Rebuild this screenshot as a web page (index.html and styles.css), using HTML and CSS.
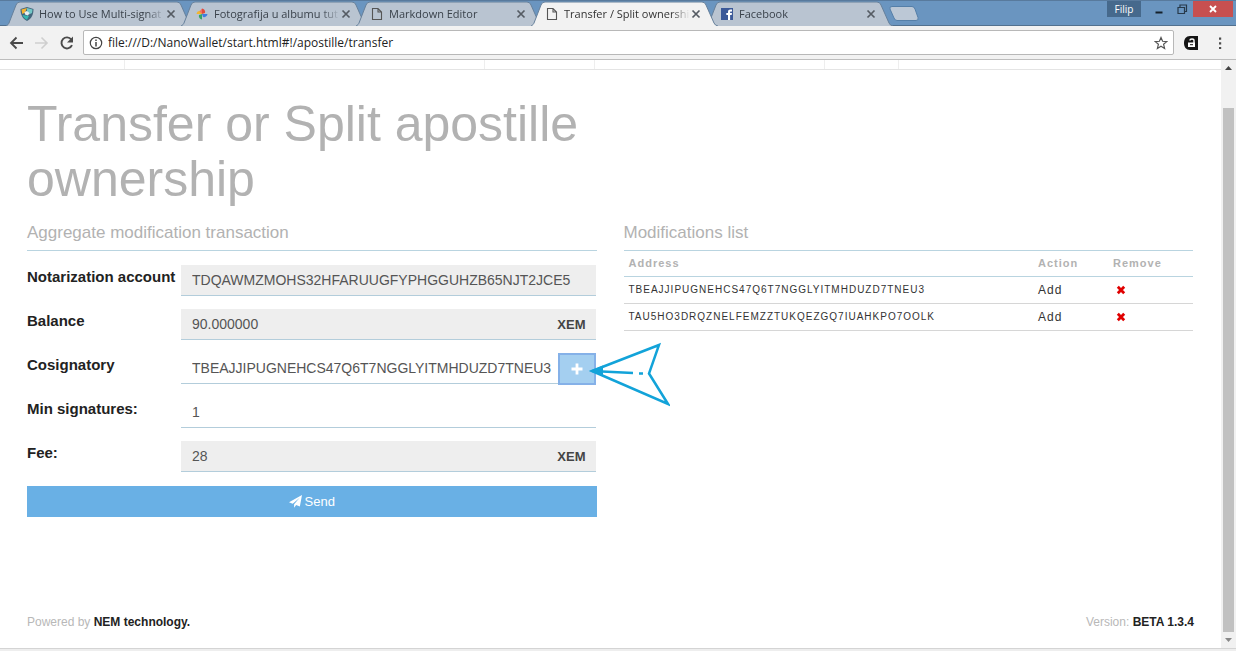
FILE: index.html
```html
<!DOCTYPE html>
<html lang="en">
<head>
<meta charset="utf-8">
<title>Transfer / Split ownership</title>
<link rel="stylesheet" href="styles.css">
</head>
<body>
<svg class="defs" aria-hidden="true">
  <symbol id="tab-shape" viewBox="0 0 187 25" preserveAspectRatio="none"><path d="M0 25 C2 24 2.500 23 3 22 L10 4 Q11 1 14 1 H171 Q174 1 175 4 L183 22 Q184 24.500 187 25"/></symbol>
  <symbol id="close" viewBox="0 0 10 10"><path d="M1.500 1.500 8.500 8.500M8.500 1.500 1.500 8.500" fill="none" stroke="#555b63" stroke-width="1.700"/></symbol>
  <symbol id="doc" viewBox="0 0 12 14"><path d="M1.500 1.500H7L10.500 5V12.500H1.500ZM7 1.500V5H10.500" fill="none" stroke="#555" stroke-width="1.100"/></symbol>
  <symbol id="remove" viewBox="0 0 10 10"><path d="M1.800 1.800 8.200 8.200M8.200 1.800 1.800 8.200" fill="none" stroke="#e00000" stroke-width="2.800"/></symbol>
</svg>

<header class="browser">
  <div class="titlebar">
    <nav class="tabs" aria-label="Tabs">
      <div class="tab">
        <svg class="shape"><use href="#tab-shape"/></svg>
        <svg class="favicon" viewBox="0 0 14 14"><path d="M7 0 13.500 2C13.500 8 11.500 11.500 7 14 2.500 11.500 .5 8 .5 2Z" fill="#42657c"/><path d="M7 1 1.500 2.500 2.300 7 5 5.500Z" fill="#f5b32f"/><path d="M7 1 12.500 2.500 12 6 9 7.500 7 4Z" fill="#72c7c7"/><path d="M2.500 8 6 8.500 9 9 7 12.800C5 12 3.500 10.500 2.500 8Z" fill="#35b6b0"/><path d="M4.500 5 7 4 9.500 6 8 8.500 5 7.500Z" fill="#e7edf0"/></svg>
        <a class="tab-title" href="#">How to Use Multi-signat</a>
        <button class="close" aria-label="Close tab"><svg><use href="#close"/></svg></button>
      </div>
      <div class="tab">
        <svg class="shape"><use href="#tab-shape"/></svg>
        <svg class="favicon" viewBox="0 0 14 14"><path d="M7 7V1.500A3.500 3.500 0 0 1 10 6Z" fill="#e14b3c"/><path d="M7 7H12.500A3.500 3.500 0 0 1 8 10Z" fill="#3f7de0"/><path d="M7 7V12.500A3.500 3.500 0 0 1 4 8Z" fill="#34a465"/><path d="M7 7H1.500A3.500 3.500 0 0 1 6 4Z" fill="#f2b62f"/><path d="M7 1.500V7L4.500 4.500Z" fill="#ef7065"/></svg>
        <a class="tab-title" href="#">Fotografija u albumu tut</a>
        <button class="close" aria-label="Close tab"><svg><use href="#close"/></svg></button>
      </div>
      <div class="tab">
        <svg class="shape"><use href="#tab-shape"/></svg>
        <svg class="favicon"><use href="#doc"/></svg>
        <a class="tab-title" href="#">Markdown Editor</a>
        <button class="close" aria-label="Close tab"><svg><use href="#close"/></svg></button>
      </div>
      <div class="tab active">
        <svg class="shape"><use href="#tab-shape"/></svg>
        <svg class="favicon"><use href="#doc"/></svg>
        <a class="tab-title" href="#" aria-current="page">Transfer / Split ownership</a>
        <button class="close" aria-label="Close tab"><svg><use href="#close"/></svg></button>
      </div>
      <div class="tab">
        <svg class="shape"><use href="#tab-shape"/></svg>
        <svg class="favicon" viewBox="0 0 14 14"><path d="M1 1H13V13H1Z" fill="#3b5998"/><path d="M8 13V8H6.300V6H8V5C8 3.200 9 2.500 10.300 2.500H12V4.400H11C10.300 4.400 10.100 4.700 10.100 5.300V6H12L11.700 8H10.100V13Z" fill="#fff"/></svg>
        <a class="tab-title" href="#">Facebook</a>
        <button class="close" aria-label="Close tab"><svg><use href="#close"/></svg></button>
      </div>
      <button class="new-tab" aria-label="New tab"><svg viewBox="0 0 30 15"><path d="M3 .5H23Q25 .5 26 3L29 11.500Q30 14.500 27 14.500H8Q6 14.500 5 12L1 3Q0 .5 3 .5Z" fill="#bcc8d6" stroke="#557fa8"/></svg></button>
    </nav>
    <div class="window-controls">
      <button class="user">Filip</button>
      <button class="control" aria-label="Minimize"><svg viewBox="0 0 12 12"><path d="M2.500 9.500H9.500" stroke="#15202b" stroke-width="2"/></svg></button>
      <button class="control" aria-label="Restore"><svg viewBox="0 0 12 12"><path d="M2 4.500H8.500V10.500H2ZM4 4V2H10.500V8.500H9" fill="none" stroke="#27394a" stroke-width="1.200"/></svg></button>
      <button class="control exit" aria-label="Close window"><svg viewBox="0 0 12 12"><path d="M3 3 9 9M9 3 3 9" stroke="#fff" stroke-width="1.900"/></svg></button>
    </div>
  </div>
  <div class="toolbar">
    <button class="tool" aria-label="Back"><svg viewBox="0 0 16 16"><path d="M15 8H3M8.500 2.500 3 8 8.500 13.500" fill="none" stroke="#4a4a4a" stroke-width="1.800"/></svg></button>
    <button class="tool" aria-label="Forward"><svg viewBox="0 0 16 16"><path d="M2 8H14M8.500 2.500 14 8 8.500 13.500" fill="none" stroke="#cfcfcf" stroke-width="1.600"/></svg></button>
    <button class="tool" aria-label="Reload"><svg viewBox="0 0 16 16"><path d="M14 10.200A5.500 5.500 0 1 1 13.300 4.500" fill="none" stroke="#4a4a4a" stroke-width="1.900"/><path d="M15 1.500V7.500H9Z" fill="#4a4a4a"/></svg></button>
    <div class="address">
      <svg viewBox="0 0 14 14"><circle cx="7" cy="7" r="5.700" fill="none" stroke="#444" stroke-width="1.200"/><path d="M7 6V10.500M7 3.500V5" stroke="#444" stroke-width="1.500"/></svg>
      <input type="text" aria-label="Address bar" value="file:///D:/NanoWallet/start.html#!/apostille/transfer">
      <button class="star" aria-label="Bookmark"><svg viewBox="0 0 14 14"><path d="M7 1.500 8.600 5.300 12.800 5.600 9.600 8.300 10.600 12.400 7 10.200 3.400 12.400 4.400 8.300 1.200 5.600 5.400 5.300Z" fill="none" stroke="#555" stroke-width="1.200"/></svg></button>
    </div>
    <button class="tool" aria-label="Extension"><svg viewBox="0 0 16 16"><path d="M7 1H15V15H7C3 15 1 12 1 8S3 1 7 1Z" fill="#151515"/><path d="M5 7.500H12V12H5Z" fill="#fff"/><path d="M7 5.500C7 3.500 11 3.500 11 5.500V8" fill="none" stroke="#fff" stroke-width="1.400"/><path d="M7 9.700H10" stroke="#151515"/></svg></button>
    <button class="tool menu" aria-label="Menu"><svg viewBox="0 0 16 16"><path d="M7 2.500H9.200V4.700H7ZM7 7.200H9.200V9.400H7ZM7 11.900H9.200V14.100H7Z" fill="#4d4d4d"/></svg></button>
  </div>
</header>

<div class="viewport">
  <div class="page">
    <div class="nav-strip"><span></span><span></span><span></span><span></span><span></span><span></span></div>
    <main class="content">
      <h1>Transfer or Split apostille ownership</h1>
      <section class="panel">
        <h2>Aggregate modification transaction</h2>
        <form class="form">
          <div class="row">
            <label for="account">Notarization account</label>
            <div class="field filled"><input id="account" type="text" readonly value="TDQAWMZMOHS32HFARUUGFYPHGGUHZB65NJT2JCE5"></div>
          </div>
          <div class="row">
            <label for="balance">Balance</label>
            <div class="field filled"><input id="balance" type="text" readonly value="90.000000"><span class="unit">XEM</span></div>
          </div>
          <div class="row">
            <label for="cosignatory">Cosignatory</label>
            <div class="field"><input id="cosignatory" type="text" value="TBEAJJIPUGNEHCS47Q6T7NGGLYITMHDUZD7TNEU3">
              <button class="add" type="button" aria-label="Add cosignatory"><svg viewBox="0 0 12 12"><path d="M6 0.500V11.500M.5 6H11.500" stroke="#fff" stroke-width="2.800"/></svg></button>
              <svg class="pointer" viewBox="0 0 82 66" aria-hidden="true"><path d="M4 29 71 3 61 31.500 80 62Z" fill="none" stroke="#12a3d9" stroke-width="2.500"/><path d="M4 29 45 31M51 31.500H55" fill="none" stroke="#12a3d9" stroke-width="2.500"/><path d="M2 29 15 23.500V34Z" fill="#12a3d9"/></svg>
            </div>
          </div>
          <div class="row">
            <label for="min">Min signatures:</label>
            <div class="field"><input id="min" type="text" value="1"></div>
          </div>
          <div class="row">
            <label for="fee">Fee:</label>
            <div class="field filled"><input id="fee" type="text" readonly value="28"><span class="unit">XEM</span></div>
          </div>
          <button class="send" type="button"><svg viewBox="0 0 14 14"><path d="M14 0 11.700 12.500 7.700 10.900 5.500 13.800V10L11.500 3 4 9.500 0 7.900Z" fill="#fff"/></svg>Send</button>
        </form>
      </section>
      <section class="panel">
        <h2>Modifications list</h2>
        <table>
          <thead><tr><th>Address</th><th class="action">Action</th><th class="remove">Remove</th></tr></thead>
          <tbody>
            <tr><td class="hash">TBEAJJIPUGNEHCS47Q6T7NGGLYITMHDUZD7TNEU3</td><td>Add</td><td><button class="delete" aria-label="Remove"><svg><use href="#remove"/></svg></button></td></tr>
            <tr><td class="hash">TAU5HO3DRQZNELFEMZZTUKQEZGQ7IUAHKPO7OOLK</td><td>Add</td><td><button class="delete" aria-label="Remove"><svg><use href="#remove"/></svg></button></td></tr>
          </tbody>
        </table>
      </section>
    </main>
    <footer class="footer">
      <span>Powered by <b>NEM technology.</b></span>
      <span>Version: <b>BETA 1.3.4</b></span>
    </footer>
  </div>
  <div class="scrollbar" aria-hidden="true">
    <svg viewBox="0 0 15 16"><path d="M4 10 7.500 6 11 10Z" fill="#444"/></svg>
    <div class="track"><div class="thumb"></div></div>
    <svg viewBox="0 0 15 16"><path d="M4 6 7.500 10 11 6Z" fill="#888"/></svg>
  </div>
</div>
</body>
</html>
```
FILE: styles.css
```css
* { box-sizing: border-box; }

body {
  margin: 0;
  min-height: 100vh;
  display: flex;
  flex-direction: column;
  background: #eee;
  color: #222;
  font-family: "Liberation Sans", Arial, sans-serif;
  font-size: 14px;
}

button {
  margin: 0;
  padding: 0;
  border: 0;
  background: none;
  font: inherit;
  color: inherit;
}

input {
  min-width: 0;
  flex: 1;
  border: 0;
  outline: 0;
  background: none;
  font: inherit;
  color: inherit;
}

svg { display: block; }
.defs { position: absolute; width: 0; height: 0; }

/* Browser frame */
.browser { font-family: "Open Sans", "Noto Sans", sans-serif; }

.titlebar {
  display: flex;
  justify-content: space-between;
  height: 26px;
  background: #6a95c0;
  border-top: 1px solid #587a9d;
  border-bottom: 1px solid #52718f;
}

.tabs { display: flex; padding-left: 6px; }

.tab {
  position: relative;
  display: flex;
  align-items: center;
  width: 187px;
  height: 25px;
  padding: 0 17px 0 14px;
  margin-right: -12px;
  font-size: 11px;
  color: #3a424b;
}

.tab.active { z-index: 1; color: #333; }

.shape {
  position: absolute;
  inset: 0;
  width: 100%;
  height: 100%;
  fill: #b9c4d1;
  stroke: #66809b;
}

.active .shape { fill: #f2f2f2; }

.favicon { position: relative; width: 14px; height: 14px; }

.tab-title {
  position: relative;
  flex: 1;
  margin-left: 5px;
  overflow: hidden;
  white-space: nowrap;
  color: inherit;
  text-decoration: none;
  mask-image: linear-gradient(to right, #000 85%, transparent);
}

.close { position: relative; margin-left: 1px; }
.close svg { width: 10px; height: 10px; }

.new-tab { margin: 5px 0 0 8px; align-self: flex-start; }
.new-tab svg { width: 30px; height: 15px; }

.window-controls {
  display: flex;
  align-items: flex-start;
  height: 16px;
  padding-right: 3px;
}
.user {
  width: 34px;
  height: 16px;
  margin-right: 6px;
  background: #46698c;
  color: #fff;
  font-size: 10px;
  line-height: 15px;
}
.control { display: grid; place-items: center; width: 23px; height: 16px; }
.control svg { width: 12px; height: 12px; }
.control.exit { width: 40px; background: #c75050; }

.toolbar {
  display: flex;
  align-items: center;
  gap: 9px;
  height: 34px;
  padding: 0 8px;
  background: #f2f2f2;
  border-bottom: 1px solid #bdbdbd;
}

.tool svg { width: 16px; height: 16px; }
.menu { margin-left: 4px; }

.address {
  flex: 1;
  display: flex;
  align-items: center;
  gap: 5px;
  height: 25px;
  padding: 0 5px;
  background: #fff;
  border: 1px solid #b8b8b8;
  border-radius: 2px;
  font-size: 12px;
}
.address svg { width: 14px; height: 14px; }
.address input { padding: 0; }

/* Wallet page */
.viewport {
  flex: 1;
  display: flex;
  margin-bottom: 2px;
  border-bottom: 1px solid #d4d4d4;
  background: #fff;
}

.page { flex: 1; display: flex; flex-direction: column; }

.nav-strip {
  display: grid;
  grid-template-columns: 125fr 360fr 110fr 230fr 74fr 322fr;
  height: 10px;
  border-bottom: 1px solid #e4e4e4;
}
.nav-strip span { border-right: 1px solid #eee; }
.nav-strip span:last-child { border: 0; }

.content {
  display: grid;
  grid-template-columns: 1fr 1fr;
  column-gap: 27px;
  padding: 27px 28px 0 27px;
}

h1 {
  grid-column: 1;
  margin: 0 0 16px;
  font-size: 50px;
  font-weight: 400;
  line-height: 55px;
  color: #b2b2b2;
}

.panel { grid-row: 2; }

h2 {
  margin: 0;
  padding-bottom: 8px;
  border-bottom: 1px solid #b9d4e0;
  font-size: 17px;
  font-weight: 400;
  line-height: 19px;
  color: #b2b2b2;
}

.form { display: grid; gap: 13px; padding-top: 14px; }

.row { display: grid; grid-template-columns: 154px 1fr; padding-right: 1px; }

label { font-size: 15px; font-weight: 700; line-height: 24px; }

.field {
  position: relative;
  display: flex;
  align-items: center;
  height: 31px;
  padding-left: 11px;
  border-bottom: 1px solid #b3cddb;
  color: #555;
}
.field input { padding: 0; }
.filled { background: #eee; }

.unit { padding: 0 10px; font-size: 13px; font-weight: 700; color: #444; }

.add {
  display: grid;
  place-items: center;
  align-self: flex-start;
  flex: none;
  width: 38px;
  height: 32px;
  background: #a4cff0;
  border: 2px solid #85b1e8;
}
.add svg { width: 12px; height: 12px; }

.pointer {
  position: absolute;
  top: -11px;
  right: -74px;
  width: 82px;
  height: 66px;
}

.send {
  display: flex;
  align-items: center;
  justify-content: center;
  gap: 3px;
  height: 31px;
  margin-top: 1px;
  background: #69b0e5;
  color: #fff;
  font-size: 13px;
}
.send svg { width: 13px; height: 13px; }

table { width: 100%; border-collapse: collapse; letter-spacing: 1px; }

th {
  height: 25px;
  padding: 0 5px;
  border-bottom: 1px solid #b9d4e0;
  text-align: left;
  font-size: 11px;
  color: #b2b2b2;
}
td {
  height: 27px;
  padding: 0 5px;
  border-bottom: 1px solid #d6d6d6;
  font-size: 12px;
  color: #333;
}
td.hash { font-size: 10px; }
.action { width: 75px; }
.remove { width: 85px; }
.delete { display: block; margin-left: 3px; }
.delete svg { width: 10px; height: 10px; }

.footer {
  display: flex;
  justify-content: space-between;
  margin-top: auto;
  padding: 0 27px 19px;
  font-size: 12px;
  line-height: 14px;
  color: #b8b8b8;
}
.footer b { color: #222; }

.scrollbar {
  display: flex;
  flex-direction: column;
  width: 15px;
  background: #f1f1f1;
}
.scrollbar svg { width: 15px; height: 16px; }
.track { flex: 1; display: flex; padding: 0 2px; }
.thumb { flex: 1; margin-top: 32px; background: #c1c1c1; }
```
